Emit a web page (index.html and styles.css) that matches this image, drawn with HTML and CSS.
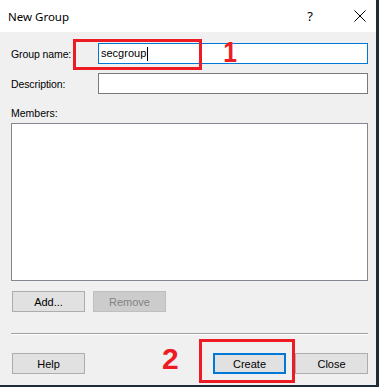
FILE: index.html
```html
<!DOCTYPE html>
<html lang="en">
<head>
  <meta charset="UTF-8" />
  <title>New Group</title>
  <link rel="stylesheet" href="styles.css">
</head>
<body>
  <div class="window">
    <div class="titlebar">
      <span class="title">New Group</span>
      <span class="help-btn">?</span>
      <span class="close-btn">
        <svg width="12" height="12" viewBox="0 0 12 12"><path d="M0.5 0.5 L11.5 11.5 M11.5 0.5 L0.5 11.5" stroke="#000" stroke-width="1" fill="none"/></svg>
      </span>
    </div>

    <div class="body">
      <div class="field">
        <label>Group name:</label>
        <div class="input focused">secgroup<span class="caret"></span></div>
      </div>
      <div class="field">
        <label>Description:</label>
        <div class="input"></div>
      </div>

      <div class="members-label">Members:</div>
      <div class="listbox"></div>

      <div class="btn-row">
        <button class="btn">Add...</button>
        <button class="btn disabled">Remove</button>
      </div>

      <div class="separator"></div>

      <div class="footer-row">
        <button class="btn">Help</button>
        <div class="spacer"></div>
        <button class="btn default">Create</button>
        <button class="btn">Close</button>
      </div>
    </div>

    <!-- annotation marks -->
    <div class="mark mark-1"></div>
    <div class="num num-1">1</div>
    <div class="mark mark-2"></div>
    <div class="num num-2">2</div>
  </div>
</body>
</html>
```
FILE: styles.css
```css
body {
  margin: 0;
  background: #1d2b3a;
  font-family: 'Liberation Sans', Arial, sans-serif;
  font-size: 11px;
  color: #000;
}

.window {
  position: relative;
  width: 376px;
  height: 385px;
  background: #f0f0f0;
  border-right: 1px solid #2a2a2a;
}

.titlebar {
  height: 32px;
  background: #fff;
  display: flex;
  align-items: center;
}

.title {
  font-family: 'Noto Sans', sans-serif;
  font-size: 11.5px;
  margin-left: 8px;
  flex: 1;
}

.help-btn {
  font-family: 'Noto Sans', sans-serif;
  font-size: 13px;
  margin-right: 41px;
}

.close-btn {
  display: flex;
  margin-right: 10px;
}

.body {
  padding: 11px 8px 0 11px;
}

.field {
  display: grid;
  grid-template-columns: 87px 1fr;
  align-items: center;
  margin-bottom: 9px;
}

.field label {
  font-size: 10.5px;
  letter-spacing: -0.1px;
}

.input {
  height: 19px;
  background: #fff;
  border: 1px solid #7a7a7a;
  line-height: 19px;
  padding-left: 2px;
}

.input.focused {
  border-color: #0078d7;
}

.caret {
  display: inline-block;
  width: 1px;
  height: 14px;
  background: #000;
  vertical-align: middle;
  margin-left: 1px;
}

.members-label {
  margin-top: 12px;
  line-height: 14px;
  font-size: 10.5px;
}

.listbox {
  margin-top: 3px;
  height: 156px;
  background: #fff;
  border: 1px solid #828790;
}

.btn-row {
  display: flex;
  gap: 8px;
  margin-top: 10px;
  padding-left: 1px;
}

.btn {
  width: 73px;
  height: 21px;
  background: #e1e1e1;
  border: 1px solid #adadad;
  font-family: 'Liberation Sans', Arial, sans-serif;
  font-size: 11px;
  color: #000;
  padding: 0;
}

.btn.disabled {
  background: #cccccc;
  border-color: #bfbfbf;
  color: #838383;
}

.btn.default {
  border: 2px solid #0078d7;
}

.separator {
  margin-top: 21px;
  border-top: 1px solid #a0a0a0;
  border-bottom: 1px solid #fff;
}

.footer-row {
  display: flex;
  gap: 9px;
  margin-top: 18px;
  padding-left: 1px;
}

.spacer {
  flex: 1;
}

.mark {
  position: absolute;
  border: 3px solid #ed1c24;
}

.mark-1 {
  left: 73px;
  top: 39px;
  width: 123px;
  height: 25px;
}

.mark-2 {
  left: 199px;
  top: 339px;
  width: 90px;
  height: 38px;
}

.num {
  position: absolute;
  color: #ed1c24;
  font-family: 'Liberation Sans', Arial, sans-serif;
  font-weight: bold;
  line-height: 1;
}

.num-1 {
  left: 222px;
  top: 38px;
  font-size: 29px;
  transform: scaleX(0.85);
}

.num-2 {
  left: 162px;
  top: 344px;
  font-size: 30px;
}
```
